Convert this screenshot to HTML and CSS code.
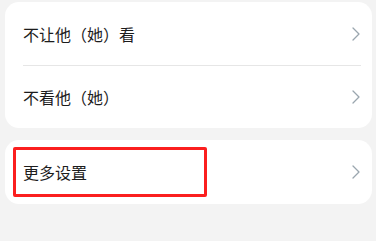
FILE: index.html
```html
<!DOCTYPE html>
<html lang="zh-CN">
<head>
<meta charset="utf-8">
<link rel="stylesheet" href="styles.css">
</head>
<body>
<div class="page">
  <div class="card">
    <div class="row">
      <span class="label">不让他（她）看</span>
      <svg class="chev" viewBox="0 0 8 14" width="8" height="14"><path d="M1 1 L7 7 L1 13" fill="none" stroke="#9aa6ae" stroke-width="1.3" stroke-linecap="round" stroke-linejoin="round"/></svg>
    </div>
    <div class="divider"></div>
    <div class="row row2">
      <span class="label">不看他（她）</span>
      <svg class="chev" viewBox="0 0 8 14" width="8" height="14"><path d="M1 1 L7 7 L1 13" fill="none" stroke="#9aa6ae" stroke-width="1.3" stroke-linecap="round" stroke-linejoin="round"/></svg>
    </div>
  </div>
  <div class="card card2">
    <div class="row row3">
      <span class="label">更多设置</span>
      <svg class="chev" viewBox="0 0 8 14" width="8" height="14"><path d="M1 1 L7 7 L1 13" fill="none" stroke="#9aa6ae" stroke-width="1.3" stroke-linecap="round" stroke-linejoin="round"/></svg>
    </div>
  </div>
  <div class="highlight"></div>
</div>
</body>
</html>
```
FILE: styles.css
```css
html, body {
  margin: 0;
  padding: 0;
  background: #f3f3f3;
}
body {
  width: 376px;
  height: 241px;
  overflow: hidden;
  font-family: "Noto Sans CJK SC", "Noto Sans", sans-serif;
}
.page {
  position: relative;
  padding: 2px 4px 0 5px;
}
.card {
  background: #ffffff;
  border-radius: 14px;
}
.card2 {
  margin-top: 12px;
}
.row {
  height: 63px;
  display: flex;
  align-items: center;
  justify-content: space-between;
  padding: 0 12px 0 18px;
}
.row2 {
  height: 62px;
}
.row3 {
  height: 64px;
}
.label {
  font-size: 16px;
  color: #1c1c1c;
  line-height: 20px;
}
.chev {
  display: block;
}
.divider {
  height: 1px;
  background: #e6e6e6;
  margin: 0 11px 0 18px;
}
.highlight {
  position: absolute;
  left: 13px;
  top: 147px;
  width: 188px;
  height: 44px;
  border: 3px solid #fb1f1f;
  border-radius: 2px;
}
```
